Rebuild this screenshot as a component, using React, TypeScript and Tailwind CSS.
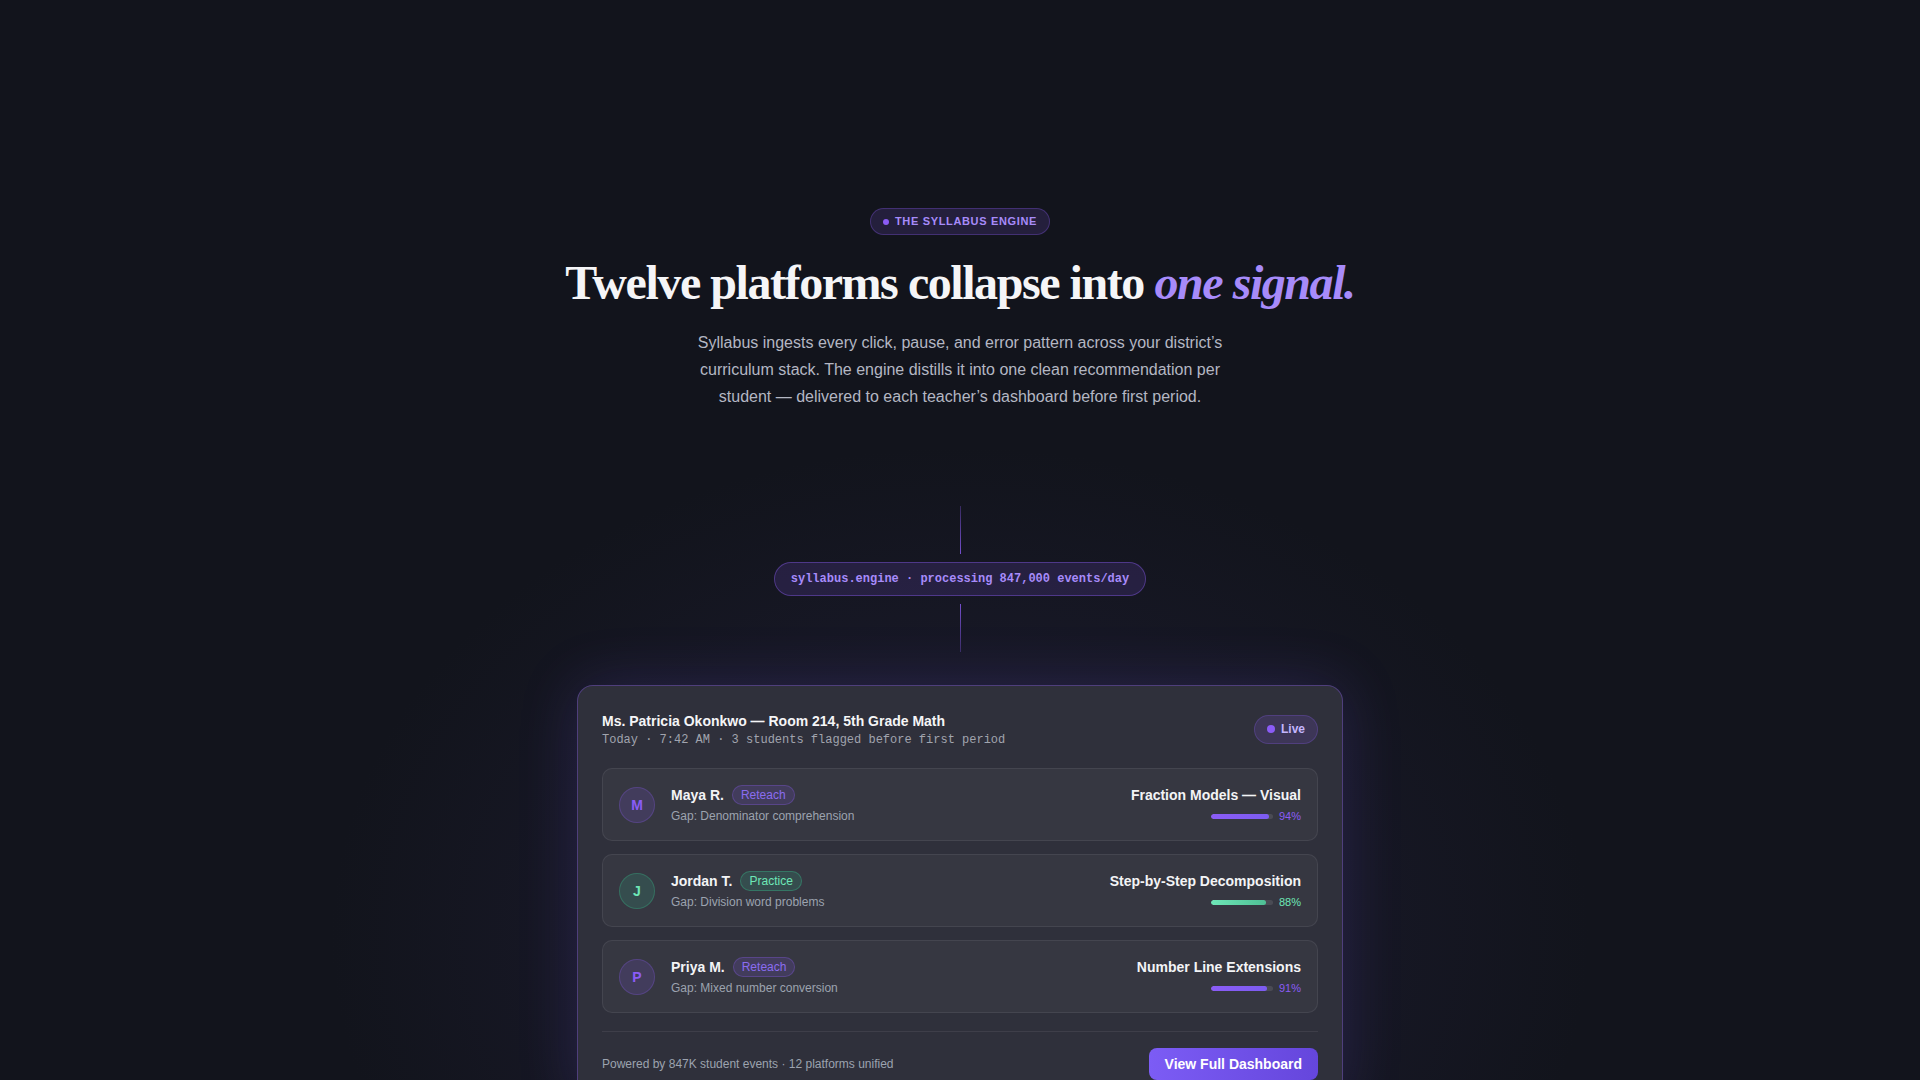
import React from "react";

type Row = {
  initial: string;
  name: string;
  tag: string;
  gap: string;
  title: string;
  pct: number;
  green?: boolean;
};

const rows: Row[] = [
  { initial: "M", name: "Maya R.", tag: "Reteach", gap: "Gap: Denominator comprehension", title: "Fraction Models — Visual", pct: 94 },
  { initial: "J", name: "Jordan T.", tag: "Practice", gap: "Gap: Division word problems", title: "Step-by-Step Decomposition", pct: 88, green: true },
  { initial: "P", name: "Priya M.", tag: "Reteach", gap: "Gap: Mixed number conversion", title: "Number Line Extensions", pct: 91 },
];

function StudentRow({ r }: { r: Row }) {
  return (
    <div className="flex items-center justify-between rounded-[10px] border border-white/[0.07] bg-white/[0.035] px-4 py-4">
      <div className="flex items-center gap-4">
        <div
          className={
            r.green
              ? "flex h-9 w-9 items-center justify-center rounded-full border border-[#34d399]/25 bg-[#34d399]/15 text-sm font-bold text-[#6ee7b7]"
              : "flex h-9 w-9 items-center justify-center rounded-full border border-[#8b5cf6]/25 bg-[#8b5cf6]/15 text-sm font-bold text-[#8b5cf6]"
          }
        >
          {r.initial}
        </div>
        <div className="flex flex-col">
          <div className="flex items-center gap-2">
            <span className="text-sm font-bold leading-5 text-[#f3f4f6]">{r.name}</span>
            <span
              className={
                r.green
                  ? "rounded-full border border-[#34d399]/30 bg-[#34d399]/15 px-2 text-xs leading-[18px] text-[#6ee7b7]"
                  : "rounded-full border border-[#8b5cf6]/30 bg-[#8b5cf6]/15 px-2 text-xs leading-[18px] text-[#8b6cf0]"
              }
            >
              {r.tag}
            </span>
          </div>
          <span className="mt-[3px] text-xs leading-4 text-[#9ca3af]">{r.gap}</span>
        </div>
      </div>
      <div className="flex flex-col items-end">
        <span className="text-sm font-bold leading-5 text-[#f3f4f6]">{r.title}</span>
        <div className="mt-[3px] flex items-center gap-1.5">
          <div className="h-[5px] w-[62px] overflow-hidden rounded-full bg-white/10">
            <div
              className={
                r.green
                  ? "h-full rounded-full bg-gradient-to-r from-[#6ee7b7] to-[#4fbf95]"
                  : "h-full rounded-full bg-gradient-to-r from-[#8b5cf6] to-[#7c5cf0]"
              }
              style={{ width: `${r.pct}%` }}
            />
          </div>
          <span className={r.green ? "text-[11px] leading-4 text-[#6ee7b7]" : "text-[11px] leading-4 text-[#8b5cf6]"}>
            {r.pct}%
          </span>
        </div>
      </div>
    </div>
  );
}

export default function App() {
  return (
    <div
      className="min-h-screen w-full bg-[#12141c] font-['Liberation_Sans',Arial,sans-serif]"
      style={{
        backgroundImage:
          "radial-gradient(ellipse 900px 700px at 50% 78%, rgba(40,36,70,0.55), rgba(18,20,28,0) 70%)",
      }}
    >
      <div className="flex flex-col items-center pt-[208px]">
        <div className="flex h-[27px] items-center gap-1.5 rounded-full border border-[#8b5cf6]/30 bg-[#8b5cf6]/15 px-3">
          <span className="h-1.5 w-1.5 rounded-full bg-[#8b5cf6]" />
          <span className="text-[11px] font-bold uppercase tracking-[0.06em] text-[#a78bfa]">The Syllabus Engine</span>
        </div>

        <h1 className="mt-[21px] font-['Liberation_Serif','Times_New_Roman',serif] text-[48px] font-bold leading-[53px] tracking-[-0.03em] text-[#f5f5f7]">
          Twelve platforms collapse into <em className="italic text-[#a78bfa]">one signal.</em>
        </h1>

        <p className="mt-[20px] max-w-[560px] text-center text-base leading-[27px] text-[#b4b7c3]">
          Syllabus ingests every click, pause, and error pattern across your district’s curriculum stack. The engine
          distills it into one clean recommendation per student — delivered to each teacher’s dashboard before first
          period.
        </p>

        <div className="mt-[96px] h-12 w-px bg-gradient-to-b from-[#8b5cf6]/30 to-[#8b5cf6]/80" />
        <div className="my-2 flex h-[34px] items-center rounded-full border border-[#8b5cf6]/40 bg-[#8b5cf6]/15 px-4">
          <span className="font-['Liberation_Mono','Courier_New',monospace] text-xs font-bold text-[#a78bfa]">
            syllabus.engine · processing 847,000 events/day
          </span>
        </div>
        <div className="h-12 w-px bg-gradient-to-b from-[#8b5cf6]/80 to-[#8b5cf6]/30" />

        <div className="mt-[33px] w-[766px] rounded-2xl border border-[#8b5cf6]/35 bg-[#2f303b] p-6 shadow-[0_0_60px_rgba(124,92,246,0.18)]">
          <div className="flex items-center justify-between">
            <div className="flex flex-col">
              <span className="text-sm font-bold leading-[22px] text-[#f5f5f7]">
                Ms. Patricia Okonkwo — Room 214, 5th Grade Math
              </span>
              <span className="font-['Liberation_Mono','Courier_New',monospace] text-xs leading-4 text-[#a1a4ae]">
                Today · 7:42 AM · 3 students flagged before first period
              </span>
            </div>
            <div className="flex h-[29px] items-center gap-1.5 rounded-full border border-[#8b5cf6]/25 bg-[#8b5cf6]/15 px-3">
              <span className="h-2 w-2 rounded-full bg-[#8b5cf6]" />
              <span className="text-xs font-semibold text-[#c4b5fd]">Live</span>
            </div>
          </div>

          <div className="mt-5 flex flex-col gap-[13px]">
            {rows.map((r) => (
              <StudentRow key={r.name} r={r} />
            ))}
          </div>

          <div className="mt-[18px] flex items-center justify-between border-t border-white/[0.07] pt-4">
            <span className="text-xs text-[#9ca3af]">Powered by 847K student events · 12 platforms unified</span>
            <button className="h-8 rounded-lg bg-gradient-to-r from-[#7c5cf5] to-[#6546dc] px-4 text-sm font-bold text-white">
              View Full Dashboard
            </button>
          </div>
        </div>
        <div className="h-24" />
      </div>
    </div>
  );
}
